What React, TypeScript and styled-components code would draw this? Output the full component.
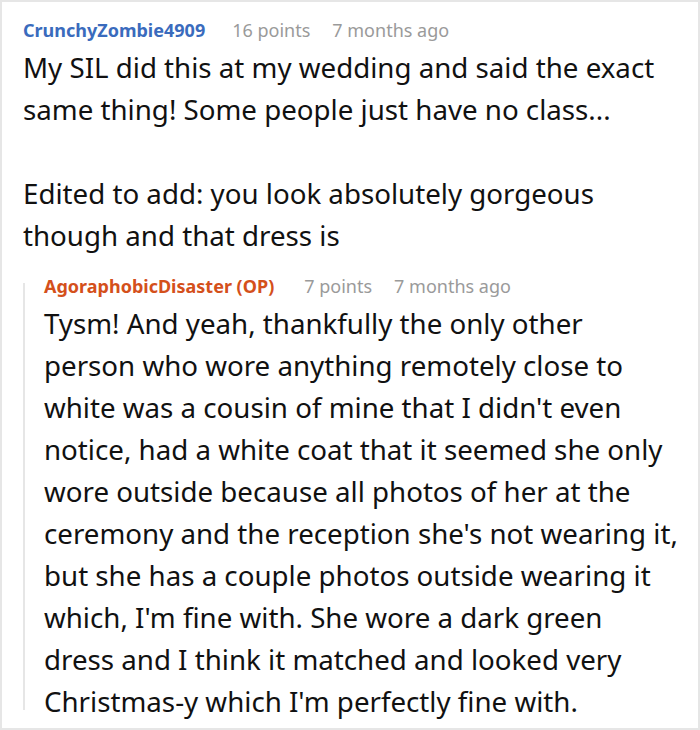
import React from "react";
import styled, { createGlobalStyle } from "styled-components";

const Global = createGlobalStyle`
  html, body { margin: 0; padding: 0; background: #fff; }
  body { font-family: "Noto Sans", "Open Sans", sans-serif; }
`;

const Thread = styled.div`
  box-sizing: border-box;
  width: 700px;
  height: 730px;
  border: 2px solid #e6e6e6;
  padding: 14px 0 0 21px;
  overflow: hidden;
`;

const Meta = styled.div<{ $op?: boolean }>`
  display: flex;
  align-items: baseline;
  gap: 22px;
  font-size: 18px;
  line-height: 28px;
  margin-bottom: 2px;
`;

const Author = styled.span<{ $op?: boolean }>`
  font-weight: 700;
  color: ${(p) => (p.$op ? "#d4501b" : "#3a6bbd")};
  margin-right: ${(p) => (p.$op ? 8 : 5)}px;
`;

const Muted = styled.span`
  color: #9a9a9a;
`;

const Body = styled.div`
  font-size: 27.7px;
  line-height: 42px;
  color: #111;
`;

const Line = styled.span`
  display: block;
  white-space: nowrap;
  min-height: 42px;
`;

const Reply = styled.div`
  position: relative;
  margin-top: 16px;
  padding: 0 0 0 21px;

  &::before {
    content: "";
    position: absolute;
    left: 0;
    top: 11px;
    bottom: 12px;
    width: 2px;
    background: #e6e6e6;
  }
`;

type Comment = {
  author: string;
  op?: boolean;
  points: number;
  age: string;
  lines: string[];
};

const parent: Comment = {
  author: "CrunchyZombie4909",
  points: 16,
  age: "7 months ago",
  lines: [
    "My SIL did this at my wedding and said the exact",
    "same thing! Some people just have no class...",
    "",
    "Edited to add: you look absolutely gorgeous",
    "though and that dress is",
  ],
};

const reply: Comment = {
  author: "AgoraphobicDisaster (OP)",
  op: true,
  points: 7,
  age: "7 months ago",
  lines: [
    "Tysm! And yeah, thankfully the only other",
    "person who wore anything remotely close to",
    "white was a cousin of mine that I didn't even",
    "notice, had a white coat that it seemed she only",
    "wore outside because all photos of her at the",
    "ceremony and the reception she's not wearing it,",
    "but she has a couple photos outside wearing it",
    "which, I'm fine with. She wore a dark green",
    "dress and I think it matched and looked very",
    "Christmas-y which I'm perfectly fine with.",
  ],
};

const CommentBlock = ({ author, op, points, age, lines }: Comment) => (
  <>
    <Meta>
      <Author $op={op}>{author}</Author>
      <Muted>{points} points</Muted>
      <Muted>{age}</Muted>
    </Meta>
    <Body>
      {lines.map((l, i) => (
        <Line key={i}>{l}</Line>
      ))}
    </Body>
  </>
);

export default function App() {
  return (
    <>
      <Global />
      <Thread>
        <CommentBlock {...parent} />
        <Reply>
          <CommentBlock {...reply} />
        </Reply>
      </Thread>
    </>
  );
}
